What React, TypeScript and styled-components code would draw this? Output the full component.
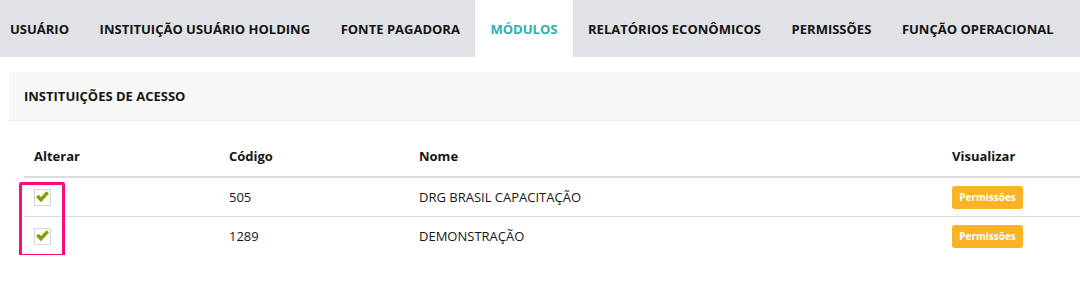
import * as React from 'react';
import styled, { createGlobalStyle } from 'styled-components';

const GlobalStyle = createGlobalStyle`
    html {
        overflow: hidden;
    }
    body {
        margin: 0;
        padding: 0;
        background: #fff;
        font-family: "Open Sans", "Liberation Sans", sans-serif;
        font-size: 13px;
        color: #151515;
    }
`;

const tabs = [
    'USUÁRIO',
    'INSTITUIÇÃO USUÁRIO HOLDING',
    'FONTE PAGADORA',
    'MÓDULOS',
    'RELATÓRIOS ECONÔMICOS',
    'PERMISSÕES',
    'FUNÇÃO OPERACIONAL',
];

const rows = [
    { code: '505', name: 'DRG BRASIL CAPACITAÇÃO' },
    { code: '1289', name: 'DEMONSTRAÇÃO' },
];

const TabBar = styled.nav`
    display: flex;
    height: 57px;
    background: #e1e2e6;
`;

const Tab = styled.div<{ active?: boolean }>`
    display: flex;
    align-items: center;
    padding: 0 15.3px;
    font-weight: 700;
    font-size: 13px;
    white-space: nowrap;
    color: ${props => props.active ? '#2bb1ae' : '#141414'};
    background: ${props => props.active ? '#fff' : 'transparent'};
    &:first-child {
        padding-left: 10px;
    }
`;

const Panel = styled.section`
    margin: 15px 0 0 9px;
`;

const PanelHeader = styled.header`
    height: 48px;
    display: flex;
    align-items: center;
    padding-left: 15px;
    background: #f8f8f8;
    border-bottom: 1px solid #ececec;
    font-weight: 700;
    font-size: 13px;
`;

const TableWrap = styled.div`
    position: relative;
    margin: 15px 0 0 15px;
`;

const Table = styled.table`
    width: 100%;
    border-collapse: collapse;
    th, td {
        text-align: left;
        padding: 0 10px;
    }
    th {
        height: 40px;
        font-weight: 700;
        border-bottom: 2px solid #dcdcdc;
    }
    td {
        height: 38px;
    }
    tbody tr + tr td {
        border-top: 1px solid #dcdcdc;
    }
`;

const Check = styled.span`
    display: inline-flex;
    align-items: center;
    justify-content: center;
    width: 15px;
    height: 15px;
    border: 1px solid #d6d6d6;
    background: #fff;
    vertical-align: middle;
    position: relative;
    top: -1px;
`;

const Button = styled.button`
    height: 23px;
    width: 71px;
    padding: 0;
    border: none;
    border-radius: 3px;
    background: #fbb325;
    color: #fff;
    font-family: "Open Sans", "Liberation Sans", sans-serif;
    font-weight: 700;
    font-size: 10px;
    vertical-align: middle;
`;

const Highlight = styled.div`
    position: absolute;
    left: -5px;
    top: 46px;
    width: 40px;
    height: 69px;
    border: 3px solid #fd0a80;
    border-radius: 2px;
    pointer-events: none;
`;

const CheckMark = () => (
    <svg width="13" height="12" viewBox="0 0 13 12">
        <path d="M0 6 L2.7 3.7 L5 6.1 L10.5 0.2 L13 2.6 L5 11.3 Z" fill="#7da30f" />
    </svg>
);

export default function App() {
    return (
        <>
            <GlobalStyle />
            <TabBar>
                {tabs.map(t => (
                    <Tab key={t} active={t === 'MÓDULOS'}>{t}</Tab>
                ))}
            </TabBar>
            <Panel>
                <PanelHeader>INSTITUIÇÕES DE ACESSO</PanelHeader>
                <TableWrap>
                    <Table>
                        <colgroup>
                            <col style={{ width: 195 }} />
                            <col style={{ width: 190 }} />
                            <col style={{ width: 533 }} />
                            <col />
                        </colgroup>
                        <thead>
                            <tr>
                                <th>Alterar</th>
                                <th>Código</th>
                                <th>Nome</th>
                                <th>Visualizar</th>
                            </tr>
                        </thead>
                        <tbody>
                            {rows.map(r => (
                                <tr key={r.code}>
                                    <td><Check><CheckMark /></Check></td>
                                    <td>{r.code}</td>
                                    <td>{r.name}</td>
                                    <td><Button>Permissões</Button></td>
                                </tr>
                            ))}
                        </tbody>
                    </Table>
                    <Highlight />
                </TableWrap>
            </Panel>
        </>
    );
}
